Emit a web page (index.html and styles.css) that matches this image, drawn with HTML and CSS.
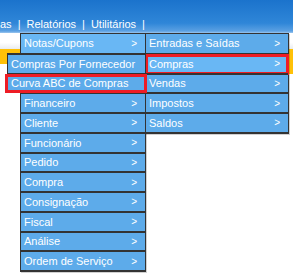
FILE: index.html
```html
<!DOCTYPE html>
<html lang="pt-BR">
<head>
  <meta charset="UTF-8">
  <title>Relatórios</title>
  <link rel="stylesheet" href="styles.css">
</head>
<body>
  <header class="topbar">
    <nav class="mainnav">
      <span>as</span><span class="sep">|</span>
      <span>Relatórios</span><span class="sep">|</span>
      <span>Utilitários</span><span class="sep">|</span>
    </nav>
  </header>

  <main class="content">
    <div class="strip"></div>
    <div class="alert-bar">
      <div class="alert-cap"></div>
      <div class="alert-fill"></div>
    </div>
  </main>

  <!-- menu aberto: Relatórios > Notas/Cupons > Compras -->
  <div class="dropdown">
    <ul class="menu menu-reports">
      <li class="active"><span>Notas/Cupons</span><span class="arrow">&gt;</span></li>
      <li></li>
      <li></li>
      <li><span>Financeiro</span><span class="arrow">&gt;</span></li>
      <li><span>Cliente</span><span class="arrow">&gt;</span></li>
      <li><span>Funcionário</span><span class="arrow">&gt;</span></li>
      <li><span>Pedido</span><span class="arrow">&gt;</span></li>
      <li><span>Compra</span><span class="arrow">&gt;</span></li>
      <li><span>Consignação</span><span class="arrow">&gt;</span></li>
      <li><span>Fiscal</span><span class="arrow">&gt;</span></li>
      <li><span>Análise</span><span class="arrow">&gt;</span></li>
      <li><span>Ordem de Serviço</span><span class="arrow">&gt;</span></li>
    </ul>

    <ul class="menu menu-notas">
      <li><span>Entradas e Saídas</span><span class="arrow">&gt;</span></li>
      <li class="active marked"><span>Compras</span><span class="arrow">&gt;</span></li>
      <li><span>Vendas</span><span class="arrow">&gt;</span></li>
      <li><span>Impostos</span><span class="arrow">&gt;</span></li>
      <li><span>Saldos</span><span class="arrow">&gt;</span></li>
    </ul>

    <ul class="menu menu-compras">
      <li><span>Compras Por Fornecedor</span></li>
      <li class="marked marked-left"><span>Curva ABC de Compras</span></li>
    </ul>
  </div>
</body>
</html>
```

FILE: styles.css
```css
/* base */
body {
  margin: 0;
  background: #fff;
  font-family: "Liberation Sans", Arial, sans-serif;
  font-size: 11px;
}

/* barra superior */
.topbar {
  height: 33px;
  box-sizing: border-box;
  background: linear-gradient(#1b73cc, #2f86d8 70%, #5aa0e2 94%, #9cc6ee);
  color: #fff;
}

.mainnav {
  display: flex;
  gap: 6px;
  padding-top: 18px;
  line-height: 13px;
  white-space: nowrap;
}

/* conteudo */
.strip {
  height: 16px;
  background: linear-gradient(#fff 60%, #e9ecef);
}

.alert-bar {
  display: flex;
  align-items: flex-start;
}

.alert-cap {
  width: 8px;
  height: 15px;
  background: #ffc107;
}

.alert-fill {
  flex: 1;
  height: 25px;
  background: #ffc107;
}

/* menus */
.dropdown {
  position: absolute;
  top: 33px;
  left: 20px;
}

.menu {
  position: absolute;
  list-style: none;
  margin: 0;
  padding: 0;
  background: #5dabea;
  border-left: 1px solid #333;
  border-right: 1px solid #333;
  border-bottom: 2px solid #333;
  box-shadow: 1px 1px 0 rgba(0, 0, 0, 0.18);
}

.menu li {
  position: relative;
  height: 19.75px;
  box-sizing: border-box;
  border-top: 2px solid #333;
  padding: 0 8px 0 3px;
  display: flex;
  align-items: center;
  justify-content: space-between;
  color: #fff;
  white-space: nowrap;
}

.menu li:first-child {
  border-top-width: 1px;
}

.menu li.active {
  background: #69b7f4;
}

.arrow {
  font-size: 10px;
}

.menu-reports {
  top: 0;
  left: 0;
  width: 126px;
  box-sizing: border-box;
}

.menu-notas {
  top: 0;
  left: 125px;
  width: 144px;
  box-sizing: border-box;
}

.menu-compras {
  top: 19.75px;
  left: -13px;
  width: 139px;
  box-sizing: border-box;
  border-bottom: none;
  box-shadow: none;
}

.menu-compras li:first-child {
  border-top-width: 2px;
}

/* destaque vermelho */
.marked::after {
  content: "";
  position: absolute;
  top: -1px;
  right: -1px;
  bottom: -2px;
  left: -1px;
  border: 3px solid #ee1c25;
}

.marked-left::after {
  top: -1px;
  right: -2px;
  bottom: -1px;
  left: -3px;
}
```
